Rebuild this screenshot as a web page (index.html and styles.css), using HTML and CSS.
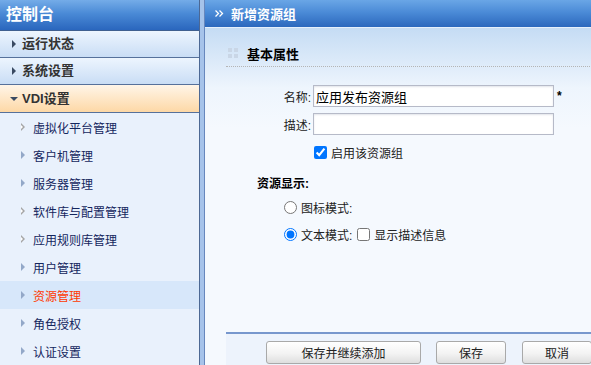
FILE: index.html
```html
<!DOCTYPE html>
<html>
<head>
  <title>新增资源组</title>
  <link rel="stylesheet" href="styles.css">
</head>
<body>
  <div class="sidebar">
    <div class="side-title">控制台</div>
    <div class="menu-item"><span class="arrow-right"></span>运行状态</div>
    <div class="menu-item"><span class="arrow-right"></span>系统设置</div>
    <div class="menu-item open"><span class="arrow-down"></span>VDI设置</div>
    <ul class="submenu">
      <li><span class="tri hollow"></span>虚拟化平台管理</li>
      <li><span class="tri"></span>客户机管理</li>
      <li><span class="tri"></span>服务器管理</li>
      <li><span class="tri hollow"></span>软件库与配置管理</li>
      <li><span class="tri hollow"></span>应用规则库管理</li>
      <li><span class="tri"></span>用户管理</li>
      <li class="active"><span class="tri"></span>资源管理</li>
      <li><span class="tri"></span>角色授权</li>
      <li><span class="tri"></span>认证设置</li>
    </ul>
  </div>
  <div class="splitter"></div>
  <div class="main">
    <div class="main-title">
      <svg class="chevrons" width="9" height="7" viewBox="0 0 9 7">
        <path d="M0.5 0.5 L3.5 3.5 L0.5 6.5 M4.5 0.5 L7.5 3.5 L4.5 6.5" fill="none" stroke="#ffffff" stroke-width="1.3"/>
      </svg>
      新增资源组
    </div>
    <div class="main-body">
      <div class="section-title">
        <span class="dots"><i></i><i></i><i></i><i></i></span>
        基本属性
      </div>
      <div class="form">
        <div class="row">
          <label class="label">名称:</label>
          <input type="text" class="text-input" value="应用发布资源组">
          <span class="required">*</span>
        </div>
        <div class="row">
          <label class="label">描述:</label>
          <input type="text" class="text-input">
        </div>
        <div class="row">
          <span class="label"></span>
          <label class="check"><input type="checkbox" checked>启用该资源组</label>
        </div>
        <div class="row group-title">资源显示:</div>
        <div class="row radio-row">
          <label class="check"><input type="radio" name="mode">图标模式:</label>
        </div>
        <div class="row radio-row last">
          <label class="check"><input type="radio" name="mode" checked>文本模式:</label>
          <label class="check"><input type="checkbox">显示描述信息</label>
        </div>
      </div>
      <div class="footer">
        <button class="btn wide">保存并继续添加</button>
        <button class="btn">保存</button>
        <button class="btn">取消</button>
      </div>
    </div>
  </div>
</body>
</html>
```

FILE: styles.css
```css
body {
  margin: 0;
  padding: 0;
  display: flex;
  height: 365px;
  overflow: hidden;
  font-family: "Liberation Sans", "Noto Sans CJK SC", sans-serif;
  font-size: 12px;
  color: #222;
}

/* 左侧菜单 */
.sidebar {
  width: 199px;
  border-right: 1px solid #4c6894;
  background-color: #e9f1fc;
  flex-shrink: 0;
}

.side-title {
  height: 30px;
  line-height: 30px;
  padding-left: 6px;
  border-bottom: 1px solid #3f5f8f;
  background: linear-gradient(#74ace8, #4a8ad6 45%, #2a66bd);
  color: #ffffff;
  font-size: 16px;
  font-weight: bold;
}

.menu-item {
  height: 26px;
  line-height: 26px;
  padding-left: 12px;
  border-bottom: 1px solid #56719b;
  background: linear-gradient(#edf5fe, #c9ddf5);
  color: #333333;
  font-size: 13px;
  font-weight: bold;
  display: flex;
  align-items: center;
}

.menu-item.open {
  height: 27px;
  padding-left: 10px;
  background: linear-gradient(#fff5e8, #fdd8a6);
}

.arrow-right {
  width: 0;
  height: 0;
  border-top: 4px solid transparent;
  border-bottom: 4px solid transparent;
  border-left: 4px solid #3a4a62;
  margin-right: 6px;
}

.arrow-down {
  width: 0;
  height: 0;
  border-left: 4px solid transparent;
  border-right: 4px solid transparent;
  border-top: 4px solid #3a4a62;
  margin-right: 4px;
}

.submenu {
  list-style: none;
  margin: 0;
  padding: 0;
}

.submenu li {
  height: 28px;
  display: flex;
  align-items: center;
  padding-left: 21px;
  color: #14265e;
}

.submenu li.active {
  background-color: #d7e7fa;
  color: #ff3a00;
}

.tri {
  width: 0;
  height: 0;
  border-top: 4px solid transparent;
  border-bottom: 4px solid transparent;
  border-left: 4px solid #93a8c8;
  margin-right: 8px;
  position: relative;
}

.tri.hollow {
  border-left-color: #a5a5a5;
}

.tri.hollow:after {
  content: "";
  position: absolute;
  left: -4px;
  top: -2px;
  border-top: 2px solid transparent;
  border-bottom: 2px solid transparent;
  border-left: 2px solid #ffffff;
}

.splitter {
  width: 4px;
  flex-shrink: 0;
  background-color: #a6c3ea;
  border-right: 1px solid #6787bd;
}

/* 右侧内容 */
.main {
  flex: 1;
  display: flex;
  flex-direction: column;
}

.main-title {
  height: 27px;
  border-bottom: 1px solid #e6f0fb;
  background: linear-gradient(#6aa6e6, #4b8bd7 45%, #2c68bd);
  color: #ffffff;
  font-size: 13px;
  font-weight: bold;
  display: flex;
  align-items: center;
  padding-left: 10px;
}

.chevrons {
  margin-right: 7px;
}

.main-body {
  flex: 1;
  display: flex;
  flex-direction: column;
  padding-left: 21px;
  background: linear-gradient(#c5dcf4, #eef5fd 60px, #f5f9fe 100px);
}

.section-title {
  margin-top: 12px;
  height: 26px;
  border-bottom: 1px dotted #b5b5b5;
  display: flex;
  align-items: center;
  padding-left: 2px;
  font-size: 13px;
  font-weight: bold;
  color: #000000;
}

.dots {
  display: grid;
  grid-template-columns: 4px 4px;
  gap: 2px;
  margin-right: 9px;
}

.dots i {
  width: 4px;
  height: 4px;
  background-color: #c9d6e6;
}

.form {
  margin-top: 15px;
}

.row {
  height: 28px;
  display: flex;
  align-items: center;
}

.label {
  width: 85px;
  text-align: right;
  margin-right: 2px;
  color: #222;
}

.text-input {
  width: 235px;
  height: 18px;
  padding: 1px 2px;
  border: 1px solid #b6bac8;
  box-shadow: inset 0 1px 2px #e2e4ea;
  font-family: "Liberation Sans", "Noto Sans CJK SC", sans-serif;
  font-size: 13px;
  color: #000;
  margin: 0;
  outline: none;
}

.required {
  margin-left: 3px;
  font-weight: bold;
  color: #000;
}

.check {
  display: flex;
  align-items: center;
  margin-right: 4px;
  color: #222;
}

.check input {
  margin: 0 4px 0 1px;
}

.group-title {
  margin-top: 4px;
  height: 24px;
  padding-left: 31px;
  font-weight: bold;
  color: #000;
}

.radio-row {
  height: 26px;
  padding-left: 57px;
}

.radio-row.last {
  height: 28px;
}

.footer {
  margin-top: auto;
  height: 31px;
  border-top: 2px solid #7797cd;
  background-color: #edf3fc;
  padding: 7px 0 0 40px;
  box-sizing: border-box;
  height: 33px;
  display: flex;
  align-items: flex-start;
}

.btn {
  height: 23px;
  width: 70px;
  margin-right: 16px;
  padding: 0;
  border: 1px solid #a9a9a9;
  border-radius: 3px;
  background: linear-gradient(#ffffff, #f3f3f3 55%, #dedede);
  font-family: "Liberation Sans", "Noto Sans CJK SC", sans-serif;
  font-size: 12px;
  color: #222;
  flex-shrink: 0;
}

.btn.wide {
  width: 155px;
  margin-right: 15px;
}
```
